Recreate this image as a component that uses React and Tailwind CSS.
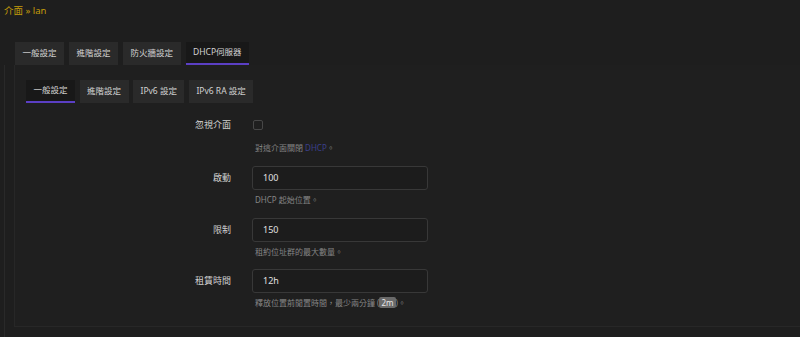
const topTabs = ["一般設定", "進階設定", "防火牆設定", "DHCP伺服器"];
const subTabs = ["一般設定", "進階設定", "IPv6 設定", "IPv6 RA 設定"];

const Tab = ({ label, active }) => (
  <div
    className={`h-[23px] px-[7.5px] flex items-center text-[8.5px] text-[#d2d2d2] ${
      active ? "bg-[#181818] border-b-2 border-[#5b3fc4]" : "bg-[#2a2a2a]"
    }`}
  >
    {label}
  </div>
);

const Field = ({ label, value, desc, className = "" }) => (
  <div className={`flex flex-col ${className}`}>
    <div className="flex items-center">
      <div className="w-[229px] shrink-0 text-right text-[9px] text-[#d0d0d0]">{label}</div>
      <div className="ml-[21px] w-[176px] h-[24px] border border-[#383838] rounded-[3px] bg-[#1c1c1c] text-[9px] text-[#e0e0e0] px-[10px] flex items-center">
        {value}
      </div>
    </div>
    <div className="ml-[253px] mt-[4px] text-[8px] leading-[12px] text-[#858585]">{desc}</div>
  </div>
);

const App = () => {
  return (
    <div
      className="w-[800px] h-[337px] bg-[#1e1e1e] overflow-hidden"
      style={{ fontFamily: '"Noto Sans", "Noto Sans CJK TC", sans-serif' }}
    >
      <div className="px-[4px] pt-[4px] text-[9.5px] text-[#c49c0a] h-[42px]">介面 » lan</div>

      <div className="flex gap-[5px] pl-[15px]">
        {topTabs.map((t, i) => (
          <Tab key={t} label={t} active={i === 3} />
        ))}
      </div>

      <div className="ml-[4px] border-l border-[#292929] h-[272px]">
        <div className="ml-[9px] border-l border-b border-[#272727] h-[262px] bg-[#1f1f1f]">
          <div className="flex gap-[4.5px] pl-[11px] pt-[15px]">
            {subTabs.map((t, i) => (
              <Tab key={t} label={t} active={i === 0} />
            ))}
          </div>

          <div className="-ml-[13px] mt-[16px] flex flex-col">
            <div className="flex items-center h-[12px]">
              <div className="w-[229px] shrink-0 text-right text-[9px] text-[#d0d0d0]">忽視介面</div>
              <div className="ml-[22px] w-[10px] h-[10px] border border-[#474747] rounded-[2px]" />
            </div>
            <div className="ml-[253px] mt-[11px] text-[8px] leading-[12px] text-[#858585]">
              對這介面關閉 <span className="text-[#3b3f8c]">DHCP</span>。
            </div>

            <Field className="mt-[12px]" label="啟動" value="100" desc="DHCP 起始位置。" />
            <Field className="mt-[12px]" label="限制" value="150" desc="租約位址群的最大數量。" />
            <Field
              className="mt-[11px]"
              label="租賃時間"
              value="12h"
              desc={
                <>
                  釋放位置前閒置時間，最少兩分鐘 (
                  <span className="bg-[#6a6a6a] text-[#e8e8e8] rounded-[2px] px-[2px]">2m</span>)。
                </>
              }
            />
          </div>
        </div>
      </div>
    </div>
  );
};

export default App;
